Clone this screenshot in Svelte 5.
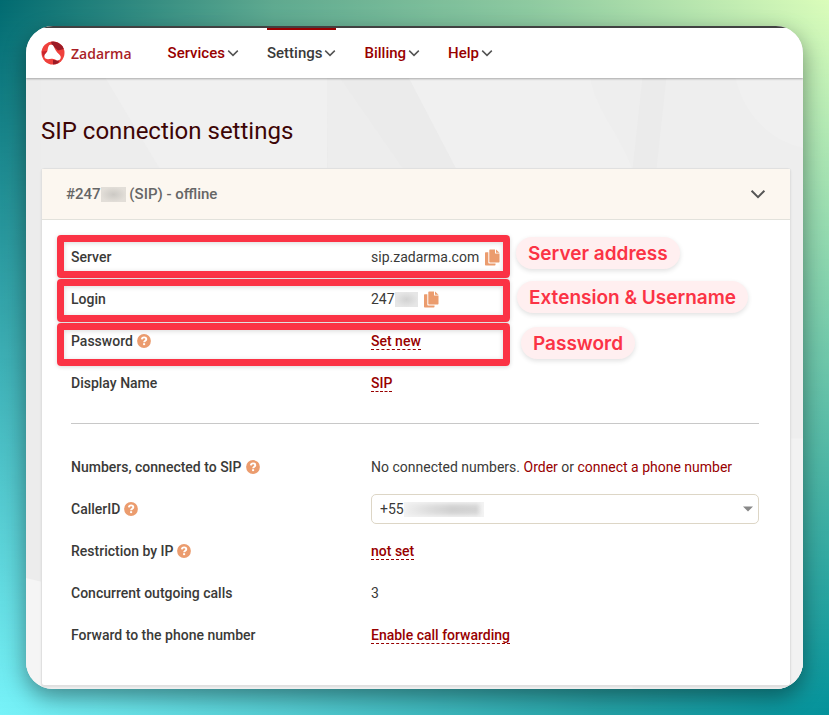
<script>
	const nav = [
		{ label: 'Services', active: false },
		{ label: 'Settings', active: true },
		{ label: 'Billing', active: false },
		{ label: 'Help', active: false }
	];

	let callerId = $state('+55');
</script>

{#snippet chevron(size)}
	<svg viewBox="0 0 12 12" width={size} height={size} fill="none" stroke="#555" stroke-width="1.5" aria-hidden="true">
		<path d="M1.2 3.6 6 8.4l4.8-4.8" />
	</svg>
{/snippet}

{#snippet help(topic)}
	<button class="icon-btn" aria-label="Help: {topic}">
		<svg viewBox="0 0 14 14" width="14" height="14" aria-hidden="true">
			<circle cx="7" cy="7" r="6.9" fill="#eb9c6e" />
			<path d="M4.9 5.4C5 4.1 5.8 3.4 7.1 3.4c1.3 0 2.2.7 2.2 1.8C9.3 6.7 7.1 6.7 7.1 8.3" fill="none" stroke="#fff" stroke-width="1.9" />
			<rect x="6.1" y="9.2" width="2" height="1.9" fill="#fff" />
		</svg>
	</button>
{/snippet}

{#snippet copy(what)}
	<button class="icon-btn" aria-label="Copy {what}">
		<svg viewBox="0 0 15 17" width="15" height="17" fill="#eb9c6e" aria-hidden="true">
			<path d="M5 .5h5v4h4.5v8.3a.7.7 0 0 1-.7.7H5a.7.7 0 0 1-.7-.7V1.2A.7.7 0 0 1 5 .5z" />
			<path d="M11 .5l3.5 3.2H11z" />
			<path d="M.7 3.3H3.3v10.4a.8.8 0 0 0 .8.8h6.4v1.3a.7.7 0 0 1-.7.7H.7a.7.7 0 0 1-.7-.7V4a.7.7 0 0 1 .7-.7z" />
		</svg>
	</button>
{/snippet}

<div class="stage">
	<div class="window">
		<header class="topbar">
			<a class="brand" href="#home">
				<svg viewBox="0 0 24 24" width="24" height="24" aria-hidden="true">
					<circle cx="12" cy="12" r="11.5" fill="#ef413c" />
					<path d="M10 .7A11.5 11.5 0 0 1 22.8 8L17 9.5 11 4z" fill="#9b1b26" />
					<path d="M.6 10.5 6 10 3.5 17A11.5 11.5 0 0 1 .6 10.5z" fill="#c9252c" />
					<path d="M12 19l6 .5-.5 2.5a11.5 11.5 0 0 1-5.5 1.4z" fill="#9b1b26" />
					<path d="M7.6 5.3c.9-1.8 3.9-2 5 0 1.6 3.2 2.4 5.5 5.7 8.3 2.6 2.3 1.5 5.7-1.3 5.8-2.2.1-3.6-2-6.5-1.7-2 .2-3.6 1-5.5.1-2.2-1-2-3.8-.3-5.3C7.4 10.2 6.2 8 7.6 5.3z" fill="#fff" />
				</svg>
				<span>Zadarma</span>
			</a>
			<nav>
				{#each nav as item}
					<button class="nav-item" class:active={item.active}>
						{item.label}
						{@render chevron(12)}
					</button>
				{/each}
			</nav>
		</header>

		<main>
			<svg class="backdrop" viewBox="0 0 777 610" preserveAspectRatio="xMidYMin slice" aria-hidden="true">
				<rect width="777" height="610" fill="#f0f0f0" />
				<path d="M0 0h80l60 100H0z" fill="#ededed" />
				<path d="M0 0h16v510L0 500z" fill="#ececec" />
				<path d="M0 499l16 4v107H0z" fill="#f5f5f5" />
				<path d="M301 0h82l48 92H301z" fill="#ebebeb" />
				<path d="M314 0l64 92h-76l-1-92z" fill="#ededed" />
				<path d="M564 0h213v610H606V92C596 60 568 30 564 0z" fill="#eeeeee" />
				<path d="M616 0h24l-10 92h-24z" fill="#ebebeb" />
				<path d="M709 0h68v70c-35-8-60-35-68-70z" fill="#f0f0f0" />
				<path d="M764 360h13v250h-13z" fill="#f2f2f2" />
			</svg>

			<h1>SIP connection settings</h1>

			<section class="card">
				<h2>
					<button class="card-head">
						<span class="account">#247<i class="redacted tan"></i> (SIP) - offline</span>
						{@render chevron(16)}
					</button>
				</h2>

				<div class="card-body">
					<div class="row">
						<span class="name">Server</span>
						<span class="value">sip.zadarma.com {@render copy('server')}</span>
					</div>
					<div class="row">
						<span class="name">Login</span>
						<span class="value">247<i class="redacted"></i> {@render copy('login')}</span>
					</div>
					<div class="row">
						<span class="name">Password {@render help('password')}</span>
						<span class="value"><a class="edit" href="#password">Set new</a></span>
					</div>
					<div class="row">
						<span class="name">Display Name</span>
						<span class="value"><a class="edit" href="#display-name">SIP</a></span>
					</div>

					<hr />

					<div class="row">
						<span class="name">Numbers, connected to SIP {@render help('numbers')}</span>
						<span class="value text">
							No connected numbers. <a href="#order">Order</a> or <a href="#connect">connect a phone number</a>
						</span>
					</div>
					<div class="row">
						<span class="name"><label for="caller-id">CallerID</label> {@render help('caller ID')}</span>
						<span class="value select">
							<select id="caller-id" bind:value={callerId}>
								<option value="+55">+55</option>
							</select>
							<i class="redacted long"></i>
							<svg class="arrow" viewBox="0 0 10 6" width="10" height="6" aria-hidden="true">
								<path d="M0 .5h10L5 5.5z" fill="#888" />
							</svg>
						</span>
					</div>
					<div class="row">
						<span class="name">Restriction by IP {@render help('restriction by IP')}</span>
						<span class="value"><a class="edit" href="#restriction">not set</a></span>
					</div>
					<div class="row">
						<span class="name">Concurrent outgoing calls</span>
						<span class="value">3</span>
					</div>
					<div class="row">
						<span class="name">Forward to the phone number</span>
						<span class="value"><a class="edit" href="#forwarding">Enable call forwarding</a></span>
					</div>

					<!-- callouts drawn over the form -->
					<div class="frame server"></div>
					<div class="frame login"></div>
					<div class="frame password"></div>
					<span class="pill server">Server address</span>
					<span class="pill login">Extension &amp; Username</span>
					<span class="pill password">Password</span>
				</div>
			</section>
		</main>
	</div>
</div>

<style>
	:global(body) {
		margin: 0;
		font-family: Roboto, Arial, sans-serif;
		color: #3a3a38;
	}
	* {
		box-sizing: border-box;
	}
	button {
		padding: 0;
		border: 0;
		background: none;
		font: inherit;
		color: inherit;
		cursor: pointer;
	}
	a {
		color: #980000;
		text-decoration: none;
	}
	svg {
		display: block;
		flex: none;
	}

	.stage {
		position: relative;
		min-height: 100vh;
		padding: 26px;
		background: linear-gradient(90deg, #78f3f9, #54ccd2 35%, #25a2a7 72%, #04929b);
	}
	.stage::before {
		content: '';
		position: absolute;
		inset: 0;
		background: linear-gradient(90deg, #016a70, #5fa98f 33%, #8fcaa0 64%, #dbfdba);
		mask-image: linear-gradient(#000, transparent);
	}
	.window {
		position: relative;
		overflow: hidden;
		border-radius: 27px;
		background: #f0f0f0;
		box-shadow: 0 8px 22px rgba(0, 0, 0, 0.4);
	}

	.topbar {
		position: relative;
		z-index: 1;
		display: flex;
		align-items: stretch;
		gap: 36px;
		height: 52px;
		padding: 0 15px;
		border-top: 2px solid #414141;
		background: #fff;
		box-shadow: 0 1px 2px rgba(0, 0, 0, 0.3);
	}
	.brand {
		display: flex;
		align-items: center;
		gap: 6px;
		font: 600 14px 'Open Sans', sans-serif;
		color: #a91e27;
	}
	nav {
		display: flex;
		gap: 28px;
	}
	.nav-item {
		display: flex;
		align-items: center;
		gap: 2px;
		border-top: 2px solid transparent;
		border-bottom: 2px solid transparent;
		font-size: 15px;
		font-weight: 500;
		color: #980000;
	}
	.nav-item.active {
		border-top-color: #980000;
		color: #3a3a3a;
	}

	main {
		position: relative;
		padding: 37px 12px 3px 15px;
	}
	.backdrop {
		position: absolute;
		inset: 0;
		width: 100%;
		height: 100%;
	}
	h1 {
		position: relative;
		margin: 0 0 21px;
		font-size: 24px;
		font-weight: 400;
		line-height: 32px;
		color: #3d0505;
	}

	.card {
		position: relative;
		border: 1px solid #e0e0e0;
		border-radius: 3px;
		background: #fff;
		box-shadow: 0 1px 2px rgba(0, 0, 0, 0.08);
	}
	h2 {
		margin: 0;
		font-size: 15px;
		font-weight: 500;
	}
	.card-head {
		display: flex;
		align-items: center;
		justify-content: space-between;
		width: 100%;
		height: 51px;
		padding: 0 24px;
		border-bottom: 1px solid #e2e2dc;
		background: #fcf7f0;
		color: #666;
	}
	.account {
		display: flex;
		align-items: center;
		white-space: pre;
	}

	.card-body {
		position: relative;
		padding: 16px 31px 29px 29px;
	}
	.row {
		display: grid;
		grid-template-columns: 300px 1fr;
		align-items: center;
		height: 42px;
		font-size: 14px;
		line-height: 16px;
	}
	.name,
	.value {
		display: flex;
		align-items: center;
	}
	.name {
		gap: 4px;
		font-weight: 500;
	}
	.value .icon-btn {
		margin-left: 6px;
	}
	.value.text {
		display: block;
	}
	.edit {
		border-bottom: 1px dashed #980000;
		font-weight: 500;
	}
	hr {
		height: 1px;
		margin: 19px 0 22px;
		border: 0;
		background: #c8c8c8;
	}

	.select {
		position: relative;
	}
	select {
		width: 100%;
		height: 30px;
		padding: 0 8px;
		border: 1px solid #ddd6c6;
		border-radius: 5px;
		background: #fff;
		font: inherit;
		color: inherit;
		appearance: none;
	}
	.arrow {
		position: absolute;
		right: 6px;
		pointer-events: none;
	}

	.redacted {
		width: 23px;
		height: 15px;
		background: radial-gradient(closest-side, #d2d2d2, #e6e6e6);
	}
	.redacted.tan {
		width: 25px;
		background: radial-gradient(closest-side, #ccc9c4, #e2ded8);
	}
	.redacted.long {
		position: absolute;
		left: 33px;
		width: 80px;
		background: linear-gradient(90deg, #f0f0f0, #dedede 30%, #d0d0d0 60%, #d4d4d4 90%, #f3f3f3);
		box-shadow: inset 0 0 4px 2px #f3f3f3;
		pointer-events: none;
	}

	.frame {
		position: absolute;
		left: 15px;
		width: 453px;
		height: 43px;
		border: 7px solid #fb3345;
		border-radius: 4px;
		box-shadow:
			0 1px 4px rgba(0, 0, 0, 0.15),
			inset 0 1px 5px rgba(0, 0, 0, 0.15);
		pointer-events: none;
	}
	.frame.server {
		top: 15px;
	}
	.frame.login {
		top: 59px;
	}
	.frame.password {
		top: 103px;
	}
	.pill {
		position: absolute;
		padding: 2px 12px 0;
		border-radius: 16px;
		background: #ffeff0;
		box-shadow: 0 2px 5px rgba(0, 0, 0, 0.12);
		font: 600 19px/30px Inter, sans-serif;
		color: #fb3345;
		white-space: nowrap;
	}
	.pill.server {
		top: 17px;
		left: 474px;
	}
	.pill.login {
		top: 61px;
		left: 475px;
	}
	.pill.password {
		top: 107px;
		left: 479px;
	}
</style>
